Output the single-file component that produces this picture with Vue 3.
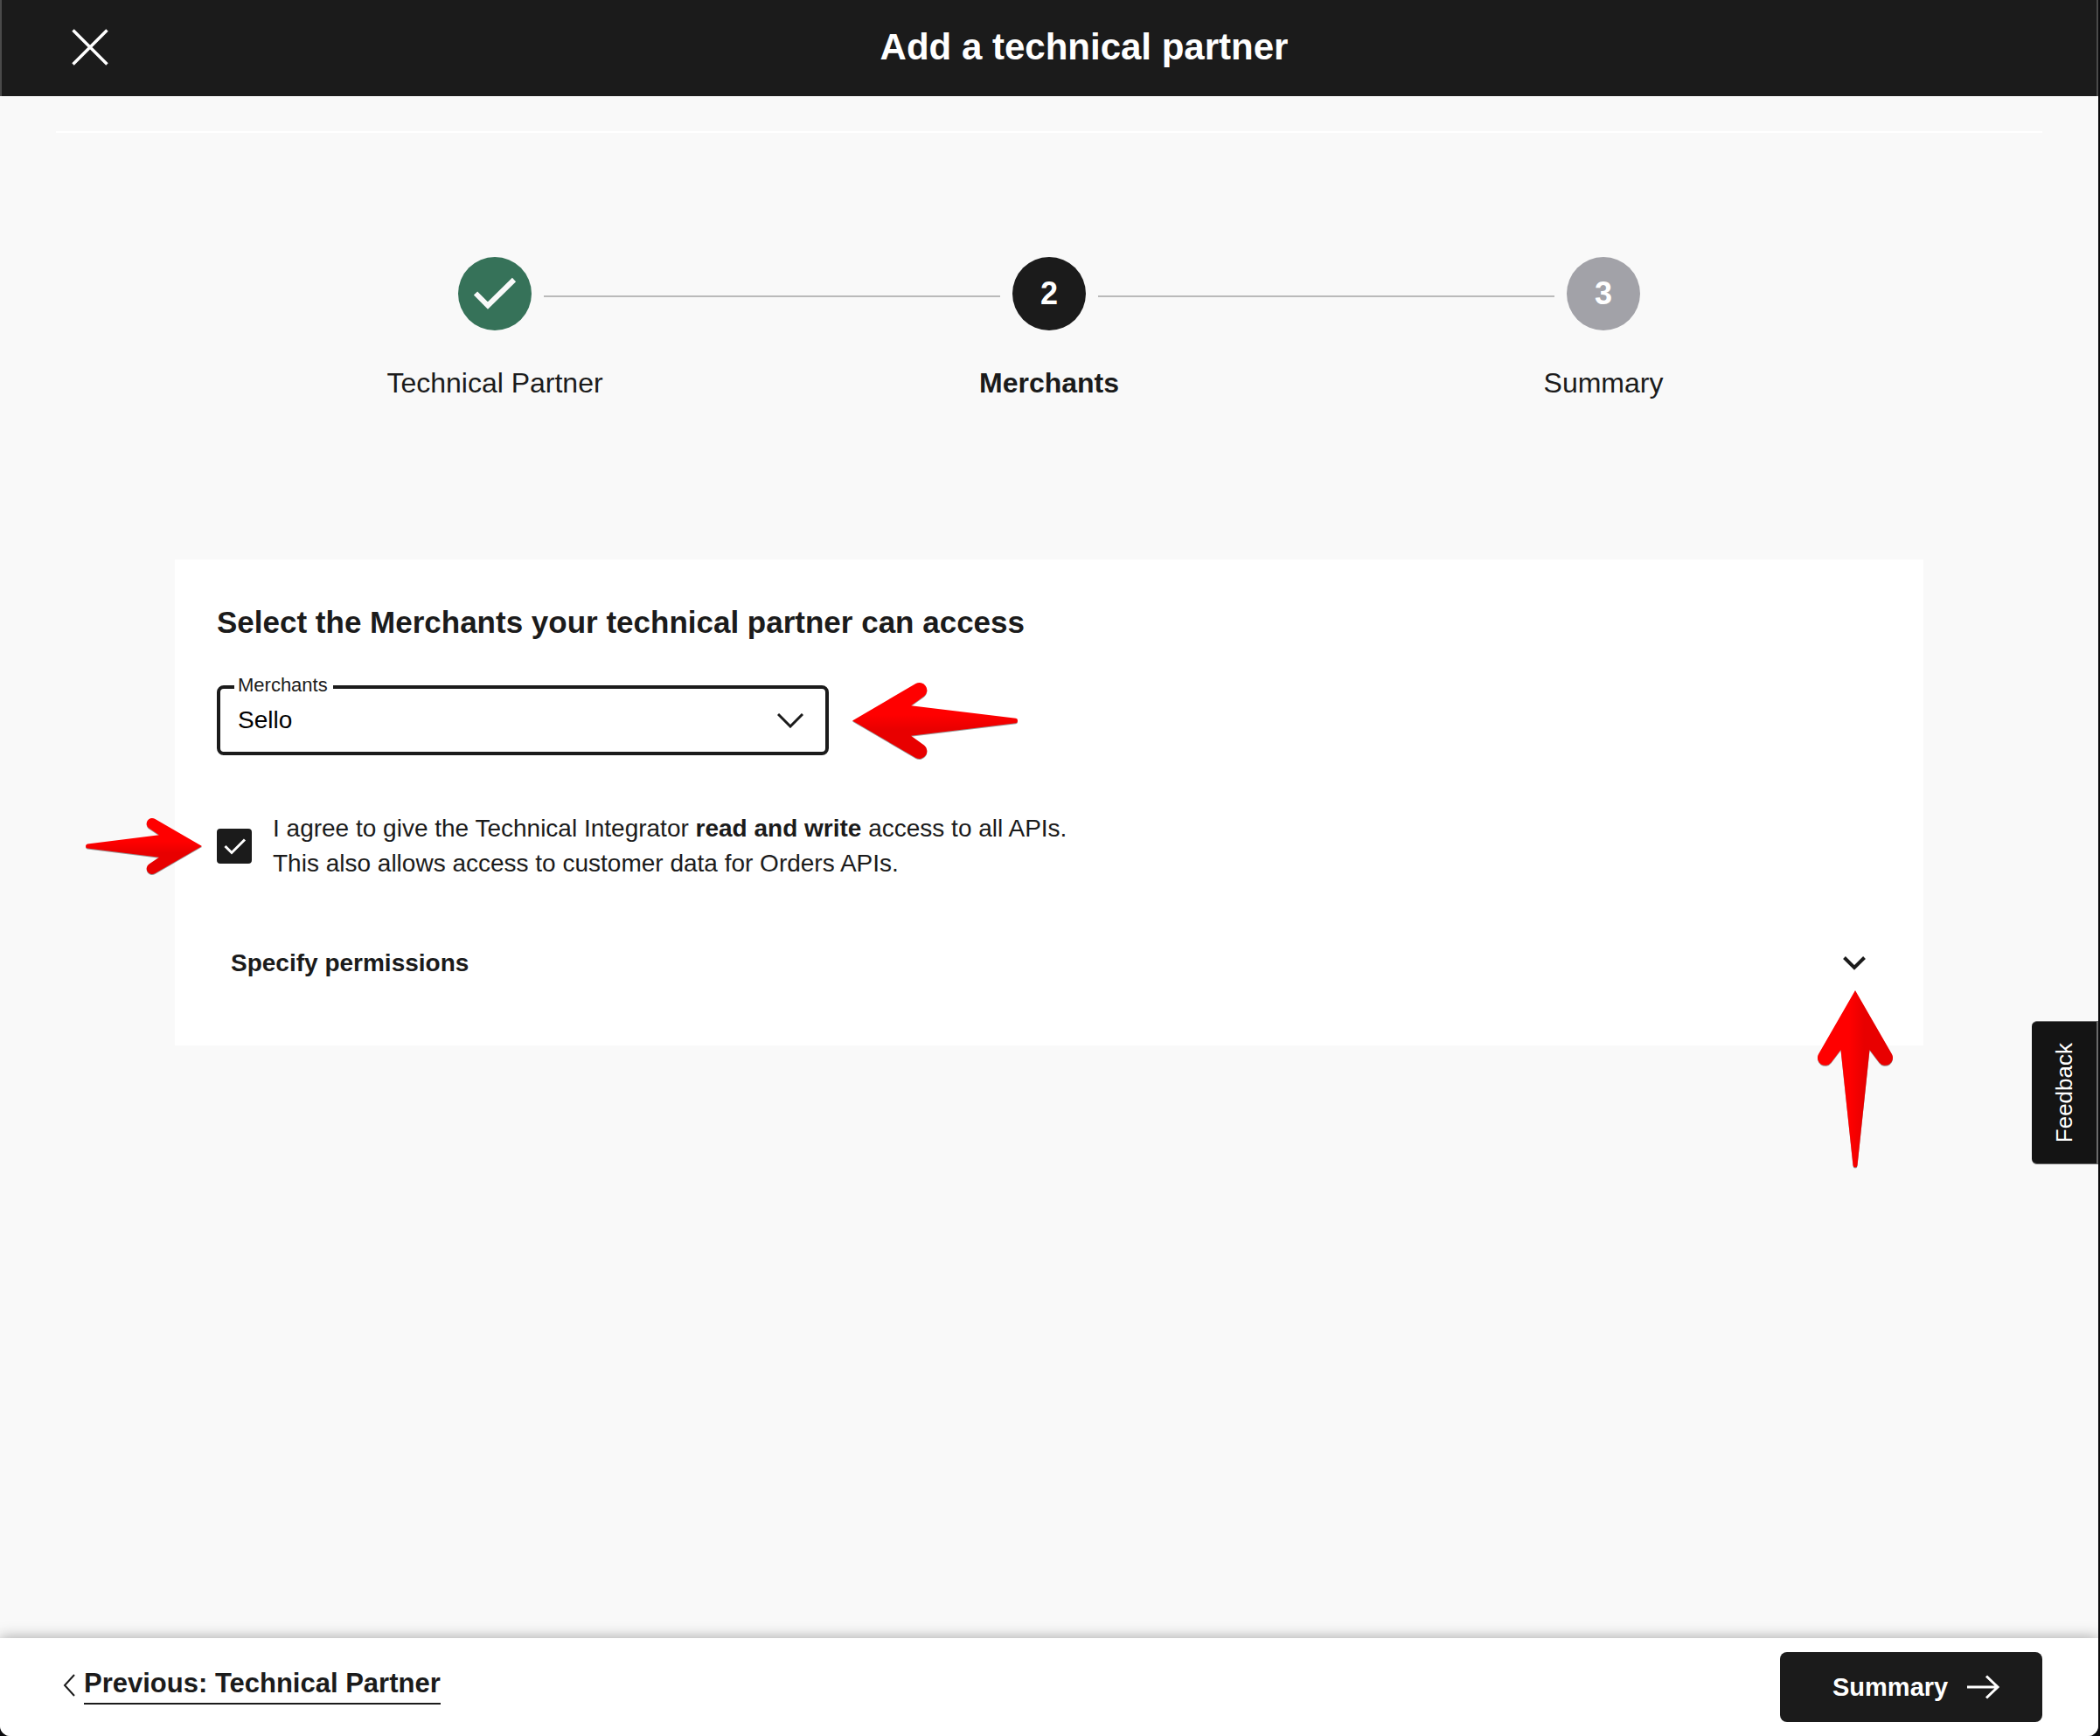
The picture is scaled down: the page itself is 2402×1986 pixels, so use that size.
<script setup>
import { ref } from 'vue'

const steps = [
  { number: 1, label: 'Technical Partner', state: 'done' },
  { number: 2, label: 'Merchants', state: 'current' },
  { number: 3, label: 'Summary', state: 'upcoming' },
]

const merchants = ['Sello']
const merchant = ref('Sello')
const agreed = ref(true)
</script>

<template>
  <div class="window">
    <header class="topbar">
      <button class="close" type="button" aria-label="Close">
        <svg width="42" height="42" viewBox="0 0 42 42" fill="none" stroke="#fff" stroke-width="3.500">
          <path d="M1.500 1.500 40.500 40.500M40.500 1.500 1.500 40.500" />
        </svg>
      </button>
      <h1 class="title">Add a technical partner</h1>
    </header>

    <main class="content">
      <hr class="rule" />

      <ol class="stepper">
        <li v-for="step in steps" :key="step.number" class="step" :class="step.state">
          <div class="track">
            <span class="line"></span>
            <span class="dot">
              <svg v-if="step.state === 'done'" width="84" height="84" viewBox="0 0 84 84" fill="none" stroke="#f9f9f9" stroke-width="6">
                <path d="M20 41.500 34 55.500 64 26" />
              </svg>
              <template v-else>{{ step.number }}</template>
            </span>
            <span class="line"></span>
          </div>
          <span class="label">{{ step.label }}</span>
        </li>
      </ol>

      <section class="card">
        <h2 class="heading">Select the Merchants your technical partner can access</h2>

        <div class="field">
          <label class="field-label" for="merchant">Merchants</label>
          <select id="merchant" v-model="merchant" class="select">
            <option v-for="name in merchants" :key="name">{{ name }}</option>
          </select>
          <svg class="field-chevron" width="30" height="17" viewBox="0 0 30 17" fill="none" stroke="#1b1b1b" stroke-width="3">
            <path d="M1 1 15 15 29 1" />
          </svg>
          <svg class="arrow arrow-left" width="189" height="87" viewBox="0 0 189 87">
            <defs>
              <linearGradient id="fade-left" x1="0" y1="0" x2="0" y2="1">
                <stop offset=".42" stop-color="#ff0000" />
                <stop offset=".62" stop-color="#e80000" />
              </linearGradient>
            </defs>
            <path fill="url(#fade-left)" d="M0 43.500 72.500 1A8.700 8.700 0 0 1 82 15.500L67 26.300 187 40.700Q189 41 189 43.500 189 46 187 46.300L67 60.700 82 71.500A8.700 8.700 0 0 1 72.500 86Z" />
          </svg>
        </div>

        <div class="consent">
          <span class="tick">
            <input id="agree" v-model="agreed" type="checkbox" />
            <svg v-if="agreed" width="40" height="40" viewBox="0 0 40 40" fill="none" stroke="#fff" stroke-width="3">
              <path d="M9.500 20 17 27.500 32 12.500" />
            </svg>
          </span>
          <label for="agree">
            I agree to give the Technical Integrator <strong>read and write</strong> access to all APIs.<br />
            This also allows access to customer data for Orders APIs.
          </label>
          <svg class="arrow arrow-right" width="133" height="64" viewBox="0 0 133 64">
            <defs>
              <linearGradient id="fade-right" x1="0" y1="0" x2="0" y2="1">
                <stop offset=".42" stop-color="#ff0000" />
                <stop offset=".62" stop-color="#e80000" />
              </linearGradient>
            </defs>
            <path fill="url(#fade-right)" d="M133 32 79.500 1A6.300 6.300 0 0 0 72.500 11.500L84 19.300 2 29.500Q0 30 0 32 0 34 2 34.500L84 44.700 72.500 52.500A6.300 6.300 0 0 0 79.500 63Z" />
          </svg>
        </div>

        <div class="permissions">
          <button class="permissions-toggle" type="button" aria-expanded="false">
            Specify permissions
            <svg width="30" height="30" viewBox="0 0 30 30" fill="none" stroke="#1b1b1b" stroke-width="4">
              <path d="M3.500 8.500 15 20 26.500 8.500" />
            </svg>
          </button>
          <svg class="arrow arrow-up" width="86" height="203" viewBox="0 0 86 203">
            <defs>
              <linearGradient id="fade-up" x1="0" y1="0" x2="1" y2="0">
                <stop offset=".42" stop-color="#ff0000" />
                <stop offset=".62" stop-color="#e80000" />
              </linearGradient>
            </defs>
            <path fill="url(#fade-up)" d="M43 0 85 73A8.700 8.700 0 0 1 70.500 82.500L59.500 68 45.500 200Q45.300 202.500 43 202.500 40.700 202.500 40.500 200L26.500 68 15.500 82.500A8.700 8.700 0 0 1 1 73Z" />
          </svg>
        </div>
      </section>
    </main>

    <footer class="footer">
      <a class="previous" href="#">
        <svg width="14" height="26" viewBox="0 0 14 26" fill="none" stroke="#1b1b1b" stroke-width="2">
          <path d="M13 1 2 13 13 25" />
        </svg>
        <span>Previous: Technical Partner</span>
      </a>
      <button class="next" type="button">
        Summary
        <svg width="38" height="28" viewBox="0 0 38 28" fill="none" stroke="#fff" stroke-width="3">
          <path d="M0 14H35M22 1.500 35 14 22 26.500" />
        </svg>
      </button>
    </footer>

    <button class="feedback" type="button">Feedback</button>
  </div>
</template>

<style>
body {
  margin: 0;
  background: #0b0b0d;
}
</style>

<style scoped>
.window {
  position: relative;
  display: flex;
  flex-direction: column;
  min-height: 100vh;
  margin-right: 2px;
  overflow: hidden;
  border-radius: 0 0 12px 12px;
  background: #f9f9f9;
  color: #1b1b1b;
  font-family: "Liberation Sans", Arial, sans-serif;
  font-size: 28px;
  line-height: 40px;
}

button {
  padding: 0;
  border: 0;
  background: none;
  color: inherit;
  font: inherit;
  cursor: pointer;
}

svg {
  display: block;
  flex: none;
}

.topbar {
  display: flex;
  align-items: center;
  box-sizing: border-box;
  height: 110px;
  padding: 0 62px 2px 60px;
  border: solid #4a4a4a;
  border-width: 0 2px;
  background: #1b1b1b;
  color: #fff;
}

.close {
  display: flex;
  align-items: center;
  justify-content: center;
  width: 82px;
  height: 80px;
}

.title {
  flex: 1;
  margin: 0;
  font-size: 42px;
  line-height: 48px;
  text-align: center;
}

.content {
  flex: 1;
}

.rule {
  height: 2px;
  margin: 40px 64px 0;
  border: 0;
  background: #fff;
}

.stepper {
  display: flex;
  margin: 142px 249px 182px;
  padding: 0;
  list-style: none;
}

.step {
  flex: 1;
  display: flex;
  flex-direction: column;
  align-items: center;
  gap: 40px;
  font-size: 32px;
}

.track {
  display: flex;
  align-items: center;
  gap: 14px;
  width: 100%;
}

.line {
  flex: 1;
  height: 2px;
  margin-top: 6px;
  background: #bababa;
}

.step:first-child .line:first-child,
.step:last-child .line:last-child {
  visibility: hidden;
}

.dot {
  display: flex;
  align-items: center;
  justify-content: center;
  width: 84px;
  height: 84px;
  border-radius: 50%;
  background: #a2a2a8;
  color: #fff;
  font-size: 36px;
  font-weight: bold;
}

.done .dot {
  background: #367259;
}

.current .dot {
  background: #1b1b1b;
}

.current .label {
  font-weight: bold;
}

.card {
  margin: 0 200px;
  padding: 48px;
  background: #fff;
}

.heading {
  margin: 0 0 48px;
  font-size: 35px;
  line-height: 48px;
}

.field {
  position: relative;
  max-width: 700px;
}

.select {
  display: block;
  box-sizing: border-box;
  width: 100%;
  height: 80px;
  padding: 0 60px 0 20px;
  border: 4px solid #1b1b1b;
  border-radius: 8px;
  background: #fff;
  color: #000;
  font: inherit;
  appearance: none;
}

.field-label {
  position: absolute;
  top: -14px;
  left: 20px;
  padding: 0 6px 0 4px;
  background: #fff;
  font-size: 22px;
  line-height: 28px;
}

.field-chevron {
  position: absolute;
  top: 32px;
  right: 29px;
  pointer-events: none;
}

.arrow {
  position: absolute;
  overflow: visible;
  filter: drop-shadow(0 1px 0 rgba(0, 0, 0, 0.4));
  pointer-events: none;
}

.arrow-left {
  top: -3px;
  left: calc(100% + 27px);
}

.arrow-right {
  top: 8px;
  left: -150px;
}

.arrow-up {
  top: 77px;
  right: -13px;
}

.consent {
  position: relative;
  display: flex;
  align-items: center;
  gap: 24px;
  margin-top: 64px;
}

.tick {
  display: grid;
}

.tick > * {
  grid-area: 1 / 1;
}

.tick input {
  width: 40px;
  height: 40px;
  margin: 0;
  border: 2px solid #1b1b1b;
  border-radius: 4px;
  appearance: none;
}

.tick input:checked {
  background: #1b1b1b;
}

.tick svg {
  pointer-events: none;
}

.permissions {
  position: relative;
  margin-top: 48px;
}

.permissions-toggle {
  display: flex;
  align-items: center;
  justify-content: space-between;
  width: 100%;
  height: 92px;
  padding: 0 16px;
  font-weight: bold;
}

.footer {
  display: flex;
  align-items: center;
  justify-content: space-between;
  box-sizing: border-box;
  height: 112px;
  padding: 0 64px 0 72px;
  background: #fff;
  box-shadow: 0 0 16px rgba(0, 0, 0, 0.36);
}

.previous {
  display: flex;
  align-items: center;
  gap: 10px;
  margin-top: -4px;
  color: #1b1b1b;
  font-size: 31px;
  font-weight: bold;
  text-decoration: none;
}

.previous span {
  padding-bottom: 2px;
  border-bottom: 2px solid #1b1b1b;
}

.next {
  display: flex;
  align-items: center;
  gap: 22px;
  width: 300px;
  height: 80px;
  padding-left: 60px;
  border-radius: 8px;
  background: #1b1b1b;
  color: #fff;
  font-size: 29px;
  font-weight: bold;
}

.feedback {
  position: absolute;
  top: 1168px;
  right: 0;
  width: 76px;
  height: 164px;
  border: solid #6b6b6b;
  border-width: 1px 2px 1px 0;
  border-radius: 6px 0 0 6px;
  background: #141414;
  color: #fff;
  font-size: 26px;
  writing-mode: sideways-lr;
}
</style>
